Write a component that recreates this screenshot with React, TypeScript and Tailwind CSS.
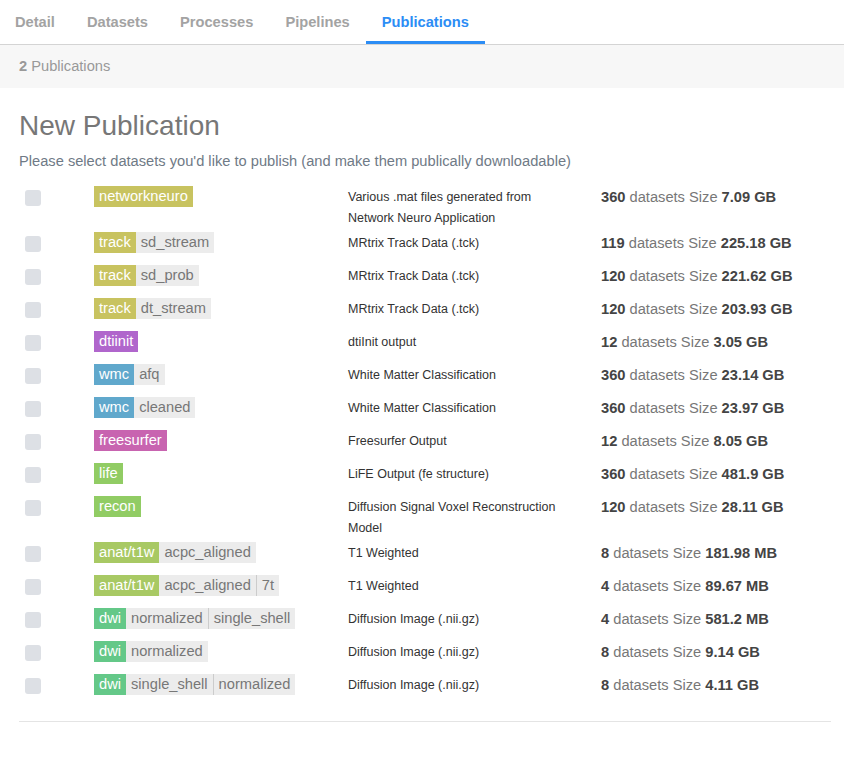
import React from "react";

type Row = {
  tags: { name: string; color: string; sub: string[] };
  desc: string;
  count: number;
  size: string;
};

const rows: Row[] = [
  { tags: { name: "networkneuro", color: "bg-[#c8c360]", sub: [] }, desc: "Various .mat files generated from Network Neuro Application", count: 360, size: "7.09 GB" },
  { tags: { name: "track", color: "bg-[#c8c360]", sub: ["sd_stream"] }, desc: "MRtrix Track Data (.tck)", count: 119, size: "225.18 GB" },
  { tags: { name: "track", color: "bg-[#c8c360]", sub: ["sd_prob"] }, desc: "MRtrix Track Data (.tck)", count: 120, size: "221.62 GB" },
  { tags: { name: "track", color: "bg-[#c8c360]", sub: ["dt_stream"] }, desc: "MRtrix Track Data (.tck)", count: 120, size: "203.93 GB" },
  { tags: { name: "dtiinit", color: "bg-[#b066cc]", sub: [] }, desc: "dtiInit output", count: 12, size: "3.05 GB" },
  { tags: { name: "wmc", color: "bg-[#60a8cc]", sub: ["afq"] }, desc: "White Matter Classification", count: 360, size: "23.14 GB" },
  { tags: { name: "wmc", color: "bg-[#60a8cc]", sub: ["cleaned"] }, desc: "White Matter Classification", count: 360, size: "23.97 GB" },
  { tags: { name: "freesurfer", color: "bg-[#c864b0]", sub: [] }, desc: "Freesurfer Output", count: 12, size: "8.05 GB" },
  { tags: { name: "life", color: "bg-[#91cc64]", sub: [] }, desc: "LiFE Output (fe structure)", count: 360, size: "481.9 GB" },
  { tags: { name: "recon", color: "bg-[#91cc64]", sub: [] }, desc: "Diffusion Signal Voxel Reconstruction Model", count: 120, size: "28.11 GB" },
  { tags: { name: "anat/t1w", color: "bg-[#a8c964]", sub: ["acpc_aligned"] }, desc: "T1 Weighted", count: 8, size: "181.98 MB" },
  { tags: { name: "anat/t1w", color: "bg-[#a8c964]", sub: ["acpc_aligned", "7t"] }, desc: "T1 Weighted", count: 4, size: "89.67 MB" },
  { tags: { name: "dwi", color: "bg-[#64c888]", sub: ["normalized", "single_shell"] }, desc: "Diffusion Image (.nii.gz)", count: 4, size: "581.2 MB" },
  { tags: { name: "dwi", color: "bg-[#64c888]", sub: ["normalized"] }, desc: "Diffusion Image (.nii.gz)", count: 8, size: "9.14 GB" },
  { tags: { name: "dwi", color: "bg-[#64c888]", sub: ["single_shell", "normalized"] }, desc: "Diffusion Image (.nii.gz)", count: 8, size: "4.11 GB" },
];

const tabs = ["Detail", "Datasets", "Processes", "Pipelines", "Publications"];

function Datatype({ name, color, sub }: Row["tags"]) {
  return (
    <div className="flex h-[21px] text-[14.67px] leading-[21px]">
      <span className={`${color} px-[5px] text-white`}>{name}</span>
      {sub.map((s, i) => (
        <span
          key={i}
          className={`bg-[#ececec] px-[5px] text-[#777] ${i > 0 ? "border-l border-[#ccc]" : ""}`}
        >
          {s}
        </span>
      ))}
    </div>
  );
}

export default function App() {
  return (
    <div className="min-h-[758px] w-[844px] bg-white font-['Liberation_Sans',Arial,sans-serif]">
      {/* Tabs */}
      <div className="flex h-[45px] border-b border-[#d4d4d4]">
        {tabs.map((t) => {
          const active = t === "Publications";
          return (
            <div
              key={t}
              className={`flex h-[44px] items-center px-4 text-[14.67px] font-bold first:pl-[15px] ${
                active
                  ? "border-b-[3px] border-[#2c8df5] pt-[3px] text-[#2c8df5]"
                  : "text-[#a3a3a3]"
              }`}
            >
              {t}
            </div>
          );
        })}
      </div>

      {/* Publications count */}
      <div className="flex h-[43px] items-center bg-[#f7f7f7] px-[19px] pb-px text-[14.67px] text-[#999]">
        <span className="font-bold">2</span>&nbsp;Publications
      </div>

      <div className="pl-[19px] pr-[13px] pt-[21px]">
        <h2 className="text-[28px] leading-[34px] text-[#777]">New Publication</h2>
        <p className="mt-[7px] text-[14.67px] leading-[22px] text-[#6f7a86]">
          Please select datasets you'd like to publish (and make them publically downloadable)
        </p>

        <div className="mt-[11px] border-b border-[#e4e4e4] pb-[17px]">
          {rows.map((r, i) => (
            <div key={i} className="flex min-h-[33px] items-start pt-[3px]">
              <div className="w-[75px] pl-[6px] pt-[4px]">
                <div className="h-[16px] w-[16px] rounded-[3px] bg-[#dde0e5]" />
              </div>
              <div className="w-[254px]">
                <Datatype {...r.tags} />
              </div>
              <div className="w-[253px] pr-[28px] pt-px text-[12.5px] leading-[21px] text-[#333]">
                {r.desc}
              </div>
              <div className="flex-1 pt-px text-[14.67px] leading-[21px] text-[#777]">
                <span className="font-bold text-[#444]">{r.count}</span> datasets Size{" "}
                <span className="font-bold text-[#444]">{r.size}</span>
              </div>
            </div>
          ))}
        </div>
      </div>
    </div>
  );
}
